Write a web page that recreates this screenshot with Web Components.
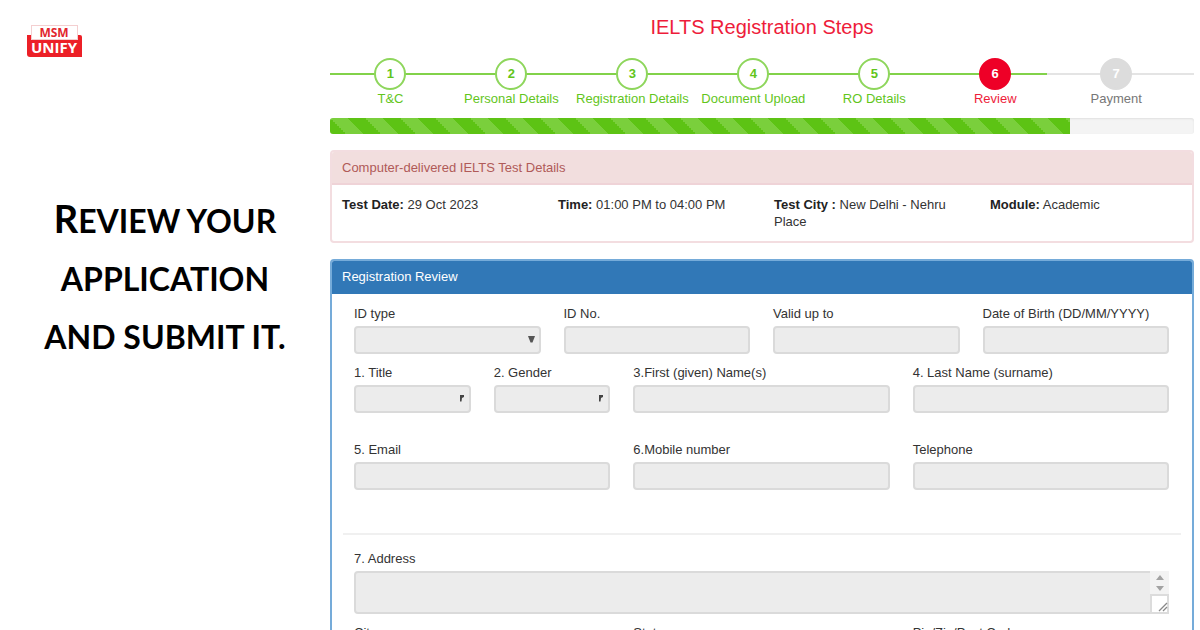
<!DOCTYPE html>
<html lang="en">
<head>
<meta charset="utf-8">
<meta name="viewport" content="width=device-width, initial-scale=1">
<title>IELTS Registration Steps</title>
<style>
  html, body { margin: 0; background: #fff; }
  body { height: 100vh; overflow: hidden; font: 13px/17px "Liberation Sans", Arial, sans-serif; color: #333; }
</style>
</head>
<body>
<review-page></review-page>
<script>
const define = (name, html, setup) => customElements.define(name, class extends HTMLElement {
  constructor() {
    super();
    this.attachShadow({ mode: "open" }).innerHTML = html;
  }
  connectedCallback() { if (setup) setup(this, this.shadowRoot); }
});

define("brand-logo", `
  <style>
    :host { display: block; width: 55px; }
    a { display: block; }
    svg { display: block; width: 100%; }
    text { font-family: "Open Sans", sans-serif; font-weight: 700; text-anchor: middle; }
  </style>
  <a href="#" aria-label="MSM Unify">
    <svg viewBox="0 0 55 32">
      <path d="M0 10h53a2 2 0 0 1 2 2v20H3a3 3 0 0 1-3-3z" fill="#ec2027"/>
      <rect x="4.500" y=".5" width="46" height="14" fill="#fff" stroke="#f4cfd0"/>
      <text x="27" y="12" font-size="12" fill="#e2262d">MSM</text>
      <text x="27" y="28" font-size="15" fill="#fff">UNIFY</text>
    </svg>
  </a>`);

define("lead-text", `
  <style>
    :host { display: block; }
    h1 { margin: 0; font: 700 32px/58px Lato, sans-serif; color: #000; text-align: center; text-transform: uppercase; }
    h1::first-letter { font-size: 38px; line-height: 30px; }
  </style>
  <h1><slot></slot></h1>`);

define("step-item", `
  <style>
    :host { display: flex; flex-direction: column; align-items: center; flex: 0 0 14%; color: #62c51b; }
    :host([state="current"]) { color: #ee1c3a; }
    :host([state="pending"]) { color: #777; }
    a { display: flex; flex-direction: column; align-items: center; color: inherit; text-decoration: none; white-space: nowrap; }
    b { box-sizing: border-box; width: 32px; height: 32px; border: 2px solid #8ed65c; border-radius: 50%; background: #fff; line-height: 28px; text-align: center; }
    :host([state="current"]) b { background: #ee0027; border-color: #ee0027; color: #fff; }
    :host([state="pending"]) b { background: #dcdcdc; border-color: #dcdcdc; color: #fff; }
  </style>
  <a href="#"><b></b><span><slot></slot></span></a>`,
  (el, root) => { root.querySelector("b").textContent = el.getAttribute("number"); });

define("step-list", `
  <style>
    :host { display: flex; background: linear-gradient(90deg, #82d24a 83%, #e4e4e4 83%) 0 15px / 100% 2px no-repeat; }
  </style>
  <slot></slot>`);

define("striped-progress", `
  <style>
    :host { display: block; }
    progress { display: block; width: 100%; height: 16px; appearance: none; border: 0; }
    progress::-webkit-progress-bar { background: #f4f4f4; border-radius: 3px; box-shadow: inset 0 1px 2px #e0e0e0; overflow: hidden; }
    progress::-webkit-progress-value {
      background: linear-gradient(45deg, #7acf3c 25%, #5dc314 25% 50%, #7acf3c 50% 75%, #5dc314 75%) 0 0 / 35px 35px;
    }
  </style>
  <progress max="1000" aria-label="Registration progress"></progress>`,
  (el, root) => { root.querySelector("progress").value = el.getAttribute("value"); });

define("info-panel", `
  <style>
    :host { display: block; box-sizing: border-box; border: 2px solid #f3dde0; border-radius: 4px; overflow: hidden; }
    h2 { margin: 0; padding: 7px 10px; font: inherit; background: #f2dede; color: #b05a58; border-bottom: 2px solid #efd3d7; }
    :host([tone="primary"]) { border-color: #75abd9; }
    :host([tone="primary"]) h2 { background: #3178b7; color: #fff; border-color: #3178b7; }
  </style>
  <h2></h2><slot></slot>`,
  (el, root) => { root.querySelector("h2").textContent = el.getAttribute("heading"); });

define("detail-grid", `
  <style>
    :host { display: grid; grid-template-columns: repeat(4, 1fr); column-gap: 24px; padding: 11px 10px; }
  </style>
  <slot></slot>`);

define("detail-item", `
  <style>:host { display: block; } b { color: #222; }</style>
  <b></b> <slot></slot>`,
  (el, root) => { root.querySelector("b").textContent = el.getAttribute("term"); });

define("field-grid", `
  <style>
    :host { display: grid; grid-template-columns: repeat(12, 1fr); column-gap: 23px; padding: 0 23px 0 22px; }
  </style>
  <slot></slot>`);

define("form-field", `
  <style>
    :host { display: block; grid-column: span 3; min-width: 0; }
    :host([size="small"]) { grid-column: span 2; }
    :host([size="large"]) { grid-column: span 4; }
    :host([size="full"]) { grid-column: 1 / -1; }
    label { display: block; margin-bottom: 4px; white-space: nowrap; }
    .box { position: relative; }
    input, select, textarea {
      display: block; box-sizing: border-box; width: 100%; height: 28px; margin: 0; padding: 0 8px;
      appearance: none; border: 2px solid #dadada; border-radius: 4px; background: #ececec; font: inherit; color: inherit;
      resize: none; outline: 0;
    }
    textarea { height: 43px; overflow: hidden; }
    svg { position: absolute; pointer-events: none; }
    .arrow { right: 6px; top: 10px; }
    .scroll { right: 0; top: 0; }
  </style>
  <label for="control"></label>
  <div class="box"></div>`,
  (el, root) => {
    const controls = {
      text: `<input id="control" type="text" readonly>`,
      select: `<select id="control"></select>
        <svg class="arrow" width="7" height="7"><path d="M0 0h7L4.500 6.500h-2z" fill="#555"/></svg>`,
      narrow: `<select id="control"></select>
        <svg class="arrow" width="5" height="7"><path d="M0 0h4v2L2 3 1.500 6.500H0z" fill="#444"/></svg>`,
      area: `<textarea id="control" readonly></textarea>
        <svg class="scroll" width="19" height="43">
          <path d="M0 0h19v24H0z" fill="#f3f3f3"/>
          <path d="M6 9l4-5 4 5zM6 15h8l-4 5z" fill="#a3a3a3"/>
          <path d="M1 24h17v18H1z" fill="#fff" stroke="#dcdcdc" stroke-width="2"/>
          <path d="M9 40l8-8M13 40l4-4" stroke="#888" stroke-width="1.300"/>
        </svg>`
    };
    root.querySelector("label").textContent = el.getAttribute("label");
    root.querySelector(".box").innerHTML = controls[el.getAttribute("kind") || "text"];
  });

define("review-form", `
  <style>
    :host { display: block; padding: 11px 0 24px; }
    .identity { margin-bottom: 10px; }
    .names { margin-bottom: 28px; }
    hr { margin: 43px 11px 15px; border: 0; border-top: 2px solid #f0f0f0; }
    .address { margin-bottom: 10px; }
  </style>
  <field-grid class="identity">
    <form-field label="ID type" kind="select"></form-field>
    <form-field label="ID No."></form-field>
    <form-field label="Valid up to"></form-field>
    <form-field label="Date of Birth (DD/MM/YYYY)"></form-field>
  </field-grid>
  <field-grid class="names">
    <form-field size="small" label="1. Title" kind="narrow"></form-field>
    <form-field size="small" label="2. Gender" kind="narrow"></form-field>
    <form-field size="large" label="3.First (given) Name(s)"></form-field>
    <form-field size="large" label="4. Last Name (surname)"></form-field>
  </field-grid>
  <field-grid>
    <form-field size="large" label="5. Email"></form-field>
    <form-field size="large" label="6.Mobile number"></form-field>
    <form-field size="large" label="Telephone"></form-field>
  </field-grid>
  <hr>
  <field-grid class="address">
    <form-field size="full" label="7. Address" kind="area"></form-field>
  </field-grid>
  <field-grid>
    <form-field size="large" label="City"></form-field>
    <form-field size="large" label="State"></form-field>
    <form-field size="large" label="Pin/Zip/Post Code"></form-field>
  </field-grid>`);

define("review-page", `
  <style>
    :host { display: grid; grid-template-columns: 27.5% minmax(0, 1fr); }
    aside { padding: 25px 0 0; }
    brand-logo { margin-left: 27px; }
    lead-text { margin-top: 135px; }
    main { padding: 15px 6px 0 0; }
    h2 { margin: 0; font-weight: 400; font-size: 20px; line-height: 24px; text-align: center; color: #ee1c3a; }
    step-list { margin-top: 19px; }
    striped-progress { margin: 11px 0 16px; }
    info-panel + info-panel { margin-top: 16px; }
  </style>
  <aside>
    <brand-logo></brand-logo>
    <lead-text>Review your<br>application<br>and submit it.</lead-text>
  </aside>
  <main>
    <h2>IELTS Registration Steps</h2>
    <step-list>
      <step-item number="1">T&amp;C</step-item>
      <step-item number="2">Personal Details</step-item>
      <step-item number="3">Registration Details</step-item>
      <step-item number="4">Document Upload</step-item>
      <step-item number="5">RO Details</step-item>
      <step-item number="6" state="current">Review</step-item>
      <step-item number="7" state="pending">Payment</step-item>
    </step-list>
    <striped-progress value="856"></striped-progress>
    <info-panel heading="Computer-delivered IELTS Test Details">
      <detail-grid>
        <detail-item term="Test Date:">29 Oct 2023</detail-item>
        <detail-item term="Time:">01:00 PM to 04:00 PM</detail-item>
        <detail-item term="Test City :">New Delhi - Nehru Place</detail-item>
        <detail-item term="Module:">Academic</detail-item>
      </detail-grid>
    </info-panel>
    <info-panel tone="primary" heading="Registration Review">
      <review-form></review-form>
    </info-panel>
  </main>`);
</script>
</body>
</html>
